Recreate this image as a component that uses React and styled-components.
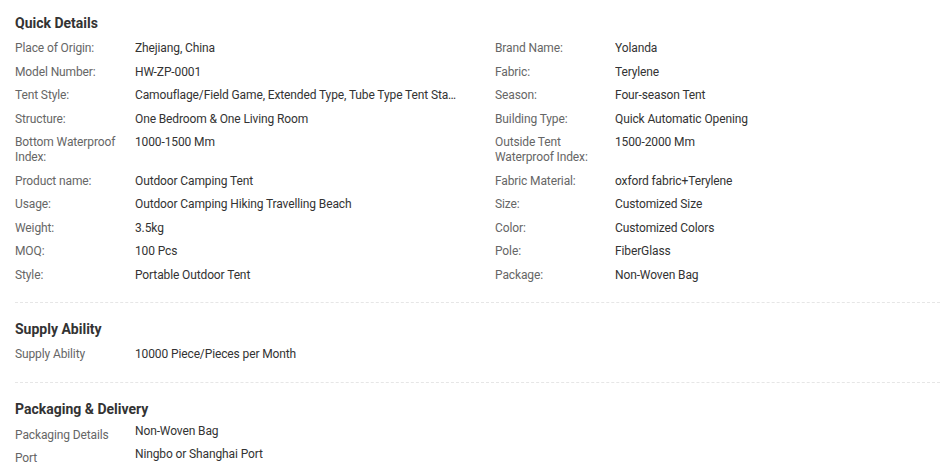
import React from 'react'
import styled, { createGlobalStyle } from 'styled-components'

const GlobalStyle = createGlobalStyle`
  body {
    margin: 0;
    background: #fff;
    font-family: Roboto, "Liberation Sans", Arial, sans-serif;
  }
`

const Wrapper = styled.div`
  padding: 0 3px 0 15px;
  font-size: 12px;
  letter-spacing: -0.12px;
  color: #333;
`

const Section = styled.section`
  padding: ${p => (p.first ? '12px' : '15px')} 0 15px;
  border-bottom: ${p => (p.last ? 'none' : '1px dashed #e6e6e6')};
`

const Title = styled.h3`
  margin: 0 0 3px;
  font-size: 14px;
  line-height: 22px;
  font-weight: 700;
  letter-spacing: 0;
  color: #333;
`

const Grid = styled.div`
  display: grid;
  grid-template-columns: 480px 1fr;
`

const Row = styled.div`
  display: flex;
  padding: 4.25px 0;
  line-height: 15px;
`

const Label = styled.div`
  width: 120px;
  flex-shrink: 0;
  color: #666;
  padding-right: 10px;
  box-sizing: border-box;
`

const Value = styled.div`
  width: 322px;
  color: #333;
  white-space: nowrap;
  overflow: hidden;
  text-overflow: ellipsis;
`

const PackRow = styled.div`
  display: flex;
  height: 23px;
  line-height: 15px;
`

const PackLabel = styled(Label)`
  padding-top: 5.5px;
`

const PackValue = styled(Value)`
  padding-top: 1.5px;
`

const details = [
  ['Place of Origin:', 'Zhejiang, China'],
  ['Brand Name:', 'Yolanda'],
  ['Model Number:', 'HW-ZP-0001'],
  ['Fabric:', 'Terylene'],
  ['Tent Style:', 'Camouflage/Field Game, Extended Type, Tube Type Tent Stakes, Umbrella Pole'],
  ['Season:', 'Four-season Tent'],
  ['Structure:', 'One Bedroom & One Living Room'],
  ['Building Type:', 'Quick Automatic Opening'],
  ['Bottom Waterproof Index:', '1000-1500 Mm'],
  ['Outside Tent Waterproof Index:', '1500-2000 Mm'],
  ['Product name:', 'Outdoor Camping Tent'],
  ['Fabric Material:', 'oxford fabric+Terylene'],
  ['Usage:', 'Outdoor Camping Hiking Travelling Beach'],
  ['Size:', 'Customized Size'],
  ['Weight:', '3.5kg'],
  ['Color:', 'Customized Colors'],
  ['MOQ:', '100 Pcs'],
  ['Pole:', 'FiberGlass'],
  ['Style:', 'Portable Outdoor Tent'],
  ['Package:', 'Non-Woven Bag'],
]

const App = () => {
  return (
    <Wrapper>
      <GlobalStyle />
      <Section first>
        <Title>Quick Details</Title>
        <Grid>
          {details.map(([label, value]) => (
            <Row key={label}>
              <Label>{label}</Label>
              <Value>{value}</Value>
            </Row>
          ))}
        </Grid>
      </Section>

      <Section>
        <Title>Supply Ability</Title>
        <Row>
          <Label>Supply Ability</Label>
          <Value>10000 Piece/Pieces per Month</Value>
        </Row>
      </Section>

      <Section last>
        <Title>Packaging &amp; Delivery</Title>
        <PackRow>
          <PackLabel>Packaging Details</PackLabel>
          <PackValue>Non-Woven Bag</PackValue>
        </PackRow>
        <PackRow>
          <PackLabel>Port</PackLabel>
          <PackValue>Ningbo or Shanghai Port</PackValue>
        </PackRow>
      </Section>
    </Wrapper>
  )
}

export default App
